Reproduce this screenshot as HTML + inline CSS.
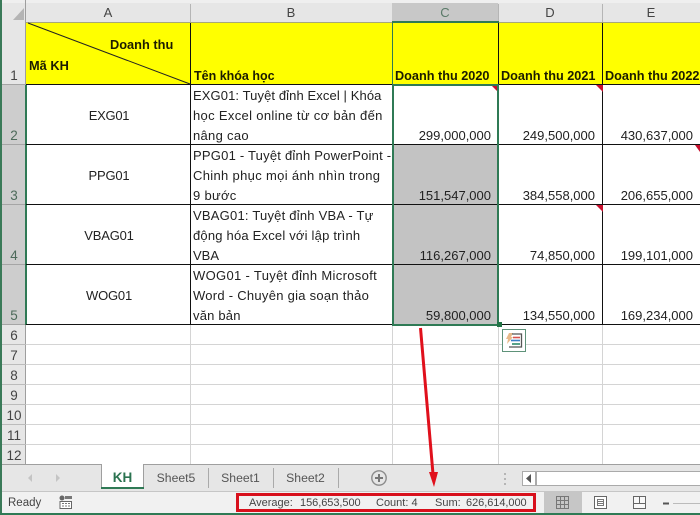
<!DOCTYPE html>
<html><head><meta charset="utf-8">
<style>
html,body{margin:0;padding:0;background:#fff}
#p{position:relative;width:700px;height:515px;overflow:hidden;background:#fff;font-family:"Liberation Sans",sans-serif;font-size:13px;color:#222}
#p div{position:absolute;box-sizing:border-box}
.t{white-space:nowrap;line-height:16px;height:16px}
.b{font-weight:bold;color:#1c1c00}
.r{text-align:right}
.c{text-align:center}
.h{color:#444;font-size:13px;text-align:center}
.rn{left:2px;width:24px;text-align:center;color:#444;font-size:13.5px;line-height:16px}
.s{font-size:11px;color:#444;white-space:nowrap;line-height:14px}
</style></head><body>
<div id="p">
<!-- headers -->
<div style="left:0;top:0;width:700px;height:22px;background:#e6e6e6"></div>
<div style="left:0;top:0;width:26px;height:464px;background:#e6e6e6"></div>
<div style="left:0;top:0;width:700px;height:3px;background:#efefef"></div>
<div style="left:392px;top:3px;width:106px;height:19px;background:#c8c8c8"></div>
<div style="left:2px;top:85px;width:24px;height:240px;background:#cdcdcd"></div>
<div style="left:25px;top:0;width:1px;height:464px;background:#9e9e9e"></div>
<div style="left:0;top:0;width:2px;height:515px;background:#3a7a58"></div>
<div style="left:190px;top:4px;width:1px;height:18px;background:#b5b5b5"></div>
<div style="left:498px;top:4px;width:1px;height:18px;background:#b5b5b5"></div>
<div style="left:602px;top:4px;width:1px;height:18px;background:#b5b5b5"></div>
<svg style="position:absolute;left:13px;top:8px" width="11" height="12"><path d="M11 0V12H0Z" fill="#b4b4b4"/></svg>
<div class="h t" style="left:26px;top:5px;width:164px">A</div>
<div class="h t" style="left:190px;top:5px;width:202px">B</div>
<div class="h t" style="left:392px;top:5px;width:106px;color:#5a7a68">C</div>
<div class="h t" style="left:498px;top:5px;width:104px">D</div>
<div class="h t" style="left:602px;top:5px;width:98px">E</div>
<!-- yellow row -->
<div style="left:26px;top:23px;width:674px;height:61px;background:#ffff00"></div>
<div style="left:26px;top:22px;width:674px;height:1px;background:#a8a878"></div>
<!-- selection fill -->
<div style="left:394px;top:145px;width:103px;height:179px;background:#c3c3c3"></div>
<!-- light gridlines -->
<div style="left:26px;top:344px;width:674px;height:1px;background:#d4d4d4"></div>
<div style="left:26px;top:364px;width:674px;height:1px;background:#d4d4d4"></div>
<div style="left:26px;top:384px;width:674px;height:1px;background:#d4d4d4"></div>
<div style="left:26px;top:404px;width:674px;height:1px;background:#d4d4d4"></div>
<div style="left:26px;top:424px;width:674px;height:1px;background:#d4d4d4"></div>
<div style="left:26px;top:444px;width:674px;height:1px;background:#d4d4d4"></div>
<div style="left:190px;top:325px;width:1px;height:139px;background:#d4d4d4"></div>
<div style="left:392px;top:325px;width:1px;height:139px;background:#d4d4d4"></div>
<div style="left:498px;top:325px;width:1px;height:139px;background:#d4d4d4"></div>
<div style="left:602px;top:325px;width:1px;height:139px;background:#d4d4d4"></div>
<div style="left:2px;top:344px;width:24px;height:1px;background:#bbb"></div>
<div style="left:2px;top:364px;width:24px;height:1px;background:#bbb"></div>
<div style="left:2px;top:384px;width:24px;height:1px;background:#bbb"></div>
<div style="left:2px;top:404px;width:24px;height:1px;background:#bbb"></div>
<div style="left:2px;top:424px;width:24px;height:1px;background:#bbb"></div>
<div style="left:2px;top:444px;width:24px;height:1px;background:#bbb"></div>
<div style="left:2px;top:84px;width:24px;height:1px;background:#a5a5a5"></div>
<div style="left:2px;top:144px;width:24px;height:1px;background:#a5a5a5"></div>
<div style="left:2px;top:204px;width:24px;height:1px;background:#a5a5a5"></div>
<div style="left:2px;top:264px;width:24px;height:1px;background:#a5a5a5"></div>
<div style="left:2px;top:324px;width:24px;height:1px;background:#a5a5a5"></div>
<div style="left:25px;top:85px;width:2px;height:240px;background:#2f7a55"></div>
<!-- black borders -->
<div style="left:26px;top:84px;width:674px;height:1px;background:#111"></div>
<div style="left:26px;top:144px;width:674px;height:1px;background:#111"></div>
<div style="left:26px;top:204px;width:674px;height:1px;background:#111"></div>
<div style="left:26px;top:264px;width:674px;height:1px;background:#111"></div>
<div style="left:26px;top:324px;width:674px;height:1px;background:#111"></div>
<div style="left:190px;top:23px;width:1px;height:302px;background:#111"></div>
<div style="left:392px;top:23px;width:1px;height:302px;background:#111"></div>
<div style="left:498px;top:23px;width:1px;height:302px;background:#111"></div>
<div style="left:602px;top:23px;width:1px;height:302px;background:#111"></div>
<svg style="position:absolute;left:26px;top:22px" width="165" height="63"><path d="M2 1L164 62" stroke="#222" stroke-width="1" fill="none"/></svg>
<!-- row numbers -->
<div class="rn" style="top:68px">1</div>
<div class="rn" style="top:128px;color:#4d6a5a">2</div>
<div class="rn" style="top:188px;color:#4d6a5a">3</div>
<div class="rn" style="top:248px;color:#4d6a5a">4</div>
<div class="rn" style="top:308px;color:#4d6a5a">5</div>
<div class="rn" style="top:328px">6</div>
<div class="rn" style="top:348px">7</div>
<div class="rn" style="top:368px">8</div>
<div class="rn" style="top:388px">9</div>
<div class="rn" style="top:408px">10</div>
<div class="rn" style="top:428px">11</div>
<div class="rn" style="top:448px">12</div>
<!-- header text -->
<div class="t b" style="left:110px;top:37px;font-size:12.8px">Doanh thu</div>
<div class="t b" style="left:29px;top:58px;font-size:12.8px">Mã KH</div>
<div class="t b" style="left:194px;top:68px;font-size:12.5px">Tên khóa học</div>
<div class="t b" style="left:395px;top:68px;font-size:12.7px">Doanh thu 2020</div>
<div class="t b" style="left:501px;top:68px;font-size:12.7px">Doanh thu 2021</div>
<div class="t b" style="left:605px;top:68px;font-size:12.7px">Doanh thu 2022</div>
<!-- col A -->
<div class="t c" style="left:27px;top:108px;width:164px;letter-spacing:-.3px">EXG01</div>
<div class="t c" style="left:27px;top:168px;width:164px;letter-spacing:-.2px">PPG01</div>
<div class="t c" style="left:27px;top:228px;width:164px;letter-spacing:-.2px">VBAG01</div>
<div class="t c" style="left:27px;top:288px;width:164px;letter-spacing:-.2px">WOG01</div>
<!-- col B -->
<div class="t" style="left:193px;top:88px;letter-spacing:.1px">EXG01: Tuyệt đỉnh Excel | Khóa</div>
<div class="t" style="left:193px;top:108px;letter-spacing:.33px">học Excel online từ cơ bản đến</div>
<div class="t" style="left:193px;top:128px;letter-spacing:.3px">nâng cao</div>
<div class="t" style="left:193px;top:148px;letter-spacing:.22px">PPG01 - Tuyệt đỉnh PowerPoint -</div>
<div class="t" style="left:193px;top:168px;letter-spacing:.33px">Chinh phục mọi ánh nhìn trong</div>
<div class="t" style="left:193px;top:188px;letter-spacing:.3px">9 bước</div>
<div class="t" style="left:193px;top:208px;letter-spacing:.22px">VBAG01: Tuyệt đỉnh VBA - Tự</div>
<div class="t" style="left:193px;top:228px;letter-spacing:.2px">động hóa Excel với lập trình</div>
<div class="t" style="left:193px;top:248px">VBA</div>
<div class="t" style="left:193px;top:268px;letter-spacing:.33px">WOG01 - Tuyệt đỉnh Microsoft</div>
<div class="t" style="left:193px;top:288px;letter-spacing:.27px">Word - Chuyên gia soạn thảo</div>
<div class="t" style="left:193px;top:308px;letter-spacing:.2px">văn bản</div>
<!-- numbers -->
<div class="t r" style="left:392px;top:128px;width:99px">299,000,000</div>
<div class="t r" style="left:392px;top:188px;width:99px">151,547,000</div>
<div class="t r" style="left:392px;top:248px;width:99px">116,267,000</div>
<div class="t r" style="left:392px;top:308px;width:99px">59,800,000</div>
<div class="t r" style="left:498px;top:128px;width:97px">249,500,000</div>
<div class="t r" style="left:498px;top:188px;width:97px">384,558,000</div>
<div class="t r" style="left:498px;top:248px;width:97px">74,850,000</div>
<div class="t r" style="left:498px;top:308px;width:97px">134,550,000</div>
<div class="t r" style="left:602px;top:128px;width:91px">430,637,000</div>
<div class="t r" style="left:602px;top:188px;width:91px">206,655,000</div>
<div class="t r" style="left:602px;top:248px;width:91px">199,101,000</div>
<div class="t r" style="left:602px;top:308px;width:91px">169,234,000</div>
<!-- comment triangles -->
<svg style="position:absolute;left:0;top:0" width="700" height="300">
<path d="M492 86h5v5zM596 85h7v7zM695 145h5v7zM596 205h7v7z" fill="#c8102e"/>
</svg>
<!-- selection border -->
<div style="left:392px;top:21px;width:107px;height:2px;background:#2f7a55"></div>
<div style="left:392px;top:84px;width:2px;height:241px;background:#2f7a55"></div>
<div style="left:497px;top:84px;width:2px;height:241px;background:#2f7a55"></div>
<div style="left:392px;top:84px;width:107px;height:2px;background:#2f7a55"></div>
<div style="left:392px;top:324px;width:107px;height:2px;background:#2f7a55"></div>
<div style="left:392px;top:21px;width:1px;height:64px;background:#2f7a55"></div>
<div style="left:497px;top:322px;width:5px;height:5px;background:#217346;border:0"></div>
<!-- quick analysis -->
<div style="left:502px;top:329px;width:24px;height:23px;background:#fff;border:1px solid #5e9279"></div>
<svg style="position:absolute;left:506px;top:333px" width="17" height="15">
<path d="M3 0h4L5 4h2L1 11l1-5H0z" fill="#e8b98a"/>
<path d="M6 1h9.500v13H3" fill="none" stroke="#555" stroke-width="1.3"/>
<path d="M7 4.500h7" stroke="#d9534f" stroke-width="1.600"/><path d="M5 7.500h9" stroke="#3a7fc4" stroke-width="1.600"/><path d="M6 11h8" stroke="#2f8a6a" stroke-width="1.600"/>
</svg>
<!-- tab bar -->
<div style="left:2px;top:464px;width:698px;height:28px;background:#e6e6e6"></div>
<div style="left:2px;top:464px;width:698px;height:1px;background:#9f9f9f"></div>
<div style="left:2px;top:491px;width:698px;height:1px;background:#c6c6c6"></div>
<svg style="position:absolute;left:26px;top:473px" width="36" height="10"><path d="M6 1L2 5l4 4zM30 1l4 4-4 4z" fill="#c4c4c4"/></svg>
<div style="left:101px;top:464px;width:43px;height:25px;background:#fff;border-left:1px solid #9f9f9f;border-right:1px solid #9f9f9f"></div>
<div style="left:101px;top:487px;width:43px;height:2px;background:#2f7a55"></div>
<div class="t c" style="left:101px;top:470px;width:43px;font-weight:bold;color:#2b7350;font-size:13.5px">KH</div>
<div class="t c" style="left:144px;top:470px;width:64px;color:#555;font-size:12.2px">Sheet5</div>
<div class="t c" style="left:208px;top:470px;width:65px;color:#555;font-size:12.2px">Sheet1</div>
<div class="t c" style="left:273px;top:470px;width:65px;color:#555;font-size:12.2px">Sheet2</div>
<div style="left:208px;top:468px;width:1px;height:20px;background:#aaa"></div>
<div style="left:273px;top:468px;width:1px;height:20px;background:#aaa"></div>
<div style="left:338px;top:468px;width:1px;height:20px;background:#aaa"></div>
<svg style="position:absolute;left:370px;top:469px" width="18" height="18"><circle cx="9" cy="9" r="7.2" fill="none" stroke="#8c8c8c" stroke-width="1.4"/><path d="M9 5v8M5 9h8" stroke="#777" stroke-width="2"/></svg>
<svg style="position:absolute;left:503px;top:472px" width="4" height="14"><path d="M1 1h2v2H1zM1 6h2v2H1zM1 11h2v2H1z" fill="#b5b5b5"/></svg>
<div style="left:522px;top:471px;width:178px;height:15px;background:#fff;border:1px solid #aaa;border-right:0"></div>
<div style="left:535px;top:471px;width:2px;height:15px;background:#aaa"></div>
<svg style="position:absolute;left:526px;top:474px" width="6" height="9"><path d="M5 0v9L0 4.500z" fill="#555"/></svg>
<!-- status bar -->
<div style="left:2px;top:492px;width:698px;height:21px;background:#f1f1f1"></div>
<div style="left:0;top:513px;width:700px;height:2px;background:#2f7a55"></div>
<div class="s" style="left:8px;top:496px;font-size:11.5px">Ready</div>
<svg style="position:absolute;left:58px;top:495px" width="15" height="15">
<circle cx="4" cy="3" r="2.500" fill="#666"/><path d="M7 1h7v3H7z" fill="#777"/><path d="M2 6.500h11.500v7H2z" fill="#fff" stroke="#666"/><path d="M4 8.500h8M4 11h8" stroke="#777" stroke-dasharray="2 1"/>
</svg>
<div class="s" style="left:249px;top:496px">Average:</div>
<div class="s" style="left:300px;top:496px;letter-spacing:-.05px">156,653,500</div>
<div class="s" style="left:376px;top:496px">Count: 4</div>
<div class="s" style="left:435px;top:496px">Sum:</div>
<div class="s" style="left:466px;top:496px;letter-spacing:-.05px">626,614,000</div>
<div style="left:236px;top:493px;width:300px;height:19px;border:3px solid #d8101c;background:transparent"></div>
<div style="left:544px;top:492px;width:38px;height:21px;background:#c6c6c6"></div>
<svg style="position:absolute;left:555px;top:495px" width="145" height="16">
<path d="M1.500 1.500h12v12h-12zM5.500 1.500v12M9.500 1.500v12M1.500 5.500h12M1.500 9.500h12" fill="none" stroke="#777"/>
<path d="M39.500 1.500h12v12h-12z" fill="#fff" stroke="#666"/><path d="M42.500 4.500h6v6h-6zM43 6.500h5M43 8.500h5" fill="none" stroke="#777"/>
<path d="M78.500 1.500h12v12h-12zM78.500 8.500h12M84.500 1.500v7" fill="#f8f8f8" stroke="#666"/>
<path d="M108 8.500h6" stroke="#555" stroke-width="2"/><path d="M118 8.500h27" stroke="#bbb"/>
</svg>
<!-- red arrow -->
<svg style="position:absolute;left:410px;top:320px" width="40" height="170">
<path d="M10.500 8L23 154" stroke="#e0101c" stroke-width="3" fill="none"/>
<path d="M19 152L28 152L24 167Z" fill="#e0101c"/>
</svg>
</div>
</body></html>
